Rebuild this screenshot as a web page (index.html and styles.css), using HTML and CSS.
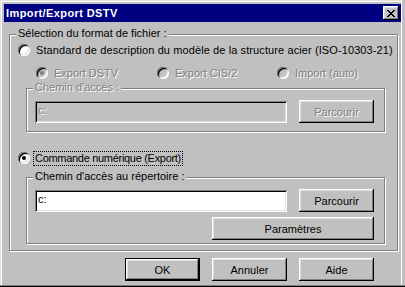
FILE: index.html
```html
<!DOCTYPE html>
<html lang="fr">
<head>
    <meta charset="UTF-8">
    <title>Import/Export DSTV</title>
    <link rel="stylesheet" href="styles.css">
</head>
<body>
    <div class="window">
        <div class="titlebar">
            <span class="title">Import/Export DSTV</span>
            <button class="close-btn">
                <svg width="8" height="7" viewBox="0 0 8 7" shape-rendering="crispEdges">
                    <path d="M0 0h2v1H0zM6 0h2v1H6zM1 1h2v1H1zM5 1h2v1H5zM2 2h4v1H2zM3 3h2v1H3zM2 4h4v1H2zM1 5h2v1H1zM5 5h2v1H5zM0 6h2v1H0zM6 6h2v1H6z" fill="#000"/>
                </svg>
            </button>
        </div>

        <div class="client">
            <div class="group group-format">
                <span class="group-label">Sélection du format de fichier :</span>

                <label class="radio-row">
                    <span class="radio"></span>
                    <span class="radio-text wide">Standard de description du modèle de la structure acier (ISO-10303-21)</span>
                </label>

                <div class="sub-options">
                    <label class="radio-row disabled">
                        <span class="radio checked"></span>
                        <span class="radio-text">Export DSTV</span>
                    </label>
                    <label class="radio-row disabled">
                        <span class="radio"></span>
                        <span class="radio-text">Export CIS/2</span>
                    </label>
                    <label class="radio-row disabled">
                        <span class="radio"></span>
                        <span class="radio-text">Import (auto)</span>
                    </label>
                </div>

                <div class="group group-inner group-path disabled">
                    <span class="group-label">Chemin d'accès :</span>
                    <div class="path-row">
                        <div class="field">c:</div>
                        <button class="btn" disabled>Parcourir</button>
                    </div>
                </div>

                <label class="radio-row row-nc">
                    <span class="radio checked"></span>
                    <span class="radio-text focus">Commande numérique (Export)</span>
                </label>

                <div class="group group-inner group-dir">
                    <span class="group-label">Chemin d'accès au répertoire :</span>
                    <div class="path-row">
                        <div class="field">c:</div>
                        <button class="btn">Parcourir</button>
                    </div>
                    <button class="btn btn-params">Paramètres</button>
                </div>
            </div>

            <div class="footer">
                <button class="btn btn-default">OK</button>
                <button class="btn">Annuler</button>
                <button class="btn">Aide</button>
            </div>
        </div>
    </div>
</body>
</html>
```

FILE: styles.css
```css
* {
    box-sizing: border-box;
}

body {
    margin: 0;
    background: #c0c0c0;
    font-family: "Liberation Sans", Arial, sans-serif;
    font-size: 11px;
    color: #000;
}

.window {
    width: 405px;
    height: 287px;
    padding: 4px;
    background: #c0c0c0;
    box-shadow: inset 0 -1px #000, inset 0 -2px #808080,
                inset -3px 0 #c0c0c0, inset -4px 0 #fff,
                inset 1px 1px #dfdfdf, inset 2px 2px #fff;
}

/* title bar */
.titlebar {
    height: 18px;
    background: #000080;
    color: #fff;
    display: flex;
    align-items: center;
    justify-content: space-between;
    padding: 0 2px;
}

.title {
    font-weight: bold;
    line-height: 18px;
    letter-spacing: 0.4px;
}

.close-btn {
    width: 16px;
    height: 14px;
    padding: 0;
    border: none;
    background: #c0c0c0;
    display: flex;
    align-items: center;
    justify-content: center;
    box-shadow: inset -1px -1px #000, inset 1px 1px #fff,
                inset -2px -2px #808080, inset 2px 2px #dfdfdf;
}

.close-btn svg {
    display: block;
}

/* dialog body */
.client {
    padding: 12px 0 0 5px;
}

.group {
    position: relative;
    border: 1px solid #808080;
    box-shadow: inset 1px 1px #fff, 1px 1px #fff;
}

.group-label {
    position: absolute;
    top: -8px;
    left: 6px;
    padding: 0 2px;
    background: #c0c0c0;
    line-height: 13px;
    white-space: nowrap;
}

.group-format {
    width: 389px;
    padding: 7px 0 6px 0;
}

.group-inner {
    width: 359px;
    margin-left: 16px;
}

.group-path {
    margin-top: 7px;
    padding: 11px 10px 8px 8px;
}

.group-dir {
    margin-top: 11px;
    padding: 11px 10px 3px 8px;
}

/* radios */
.radio-row {
    display: flex;
    align-items: center;
    height: 16px;
    padding-left: 8px;
    white-space: nowrap;
}

.radio {
    position: relative;
    flex: none;
    width: 12px;
    height: 12px;
    border-radius: 50%;
    background: #fff;
    box-shadow: inset 1px 1px #808080, inset -1px -1px #fff,
                inset 2px 2px #000, inset -2px -2px #dfdfdf;
}

.radio.checked::after {
    content: '';
    position: absolute;
    left: 4px;
    top: 4px;
    width: 4px;
    height: 4px;
    border-radius: 50%;
    background: #000;
}

.radio-text {
    margin-left: 6px;
    line-height: 13px;
}

.radio-text.wide {
    letter-spacing: 0.1px;
}

.radio-row.disabled .radio {
    background: #c0c0c0;
}

.radio-row.disabled .radio.checked::after {
    background: #808080;
}

.disabled .radio-text,
.disabled .group-label,
.disabled .field,
.btn:disabled {
    color: #808080;
    text-shadow: 1px 1px 0 #fff;
}

.sub-options {
    display: grid;
    grid-template-columns: 121px 120px auto;
    margin-top: 7px;
    padding-left: 26px;
}

.sub-options .radio-row {
    padding-left: 0;
}

.row-nc {
    margin-top: 18px;
}

.radio-text.focus {
    margin-left: 3px;
    padding: 0 1px;
    border: 1px dotted #000;
    letter-spacing: -0.3px;
}

/* fields and buttons */
.path-row {
    display: flex;
    align-items: flex-end;
    gap: 12px;
}

.field {
    width: 252px;
    height: 22px;
    padding: 3px 0 0 3px;
    line-height: 13px;
    background: #fff;
    box-shadow: inset 1px 1px #808080, inset -1px -1px #fff,
                inset 2px 2px #000, inset -2px -2px #dfdfdf;
}

.disabled .field {
    background: #c0c0c0;
}

.btn {
    width: 75px;
    height: 23px;
    padding: 0;
    border: none;
    background: #c0c0c0;
    font-family: inherit;
    font-size: 11px;
    color: #000;
    box-shadow: inset -1px -1px #000, inset 1px 1px #fff,
                inset -2px -2px #808080, inset 2px 2px #dfdfdf;
}

.btn-default {
    border: 1px solid #000;
}

.btn-params {
    display: block;
    width: 162px;
    margin: 5px 0 0 auto;
}

.footer {
    display: flex;
    justify-content: flex-end;
    gap: 12px;
    margin-top: 7px;
    padding-right: 27px;
}
```
